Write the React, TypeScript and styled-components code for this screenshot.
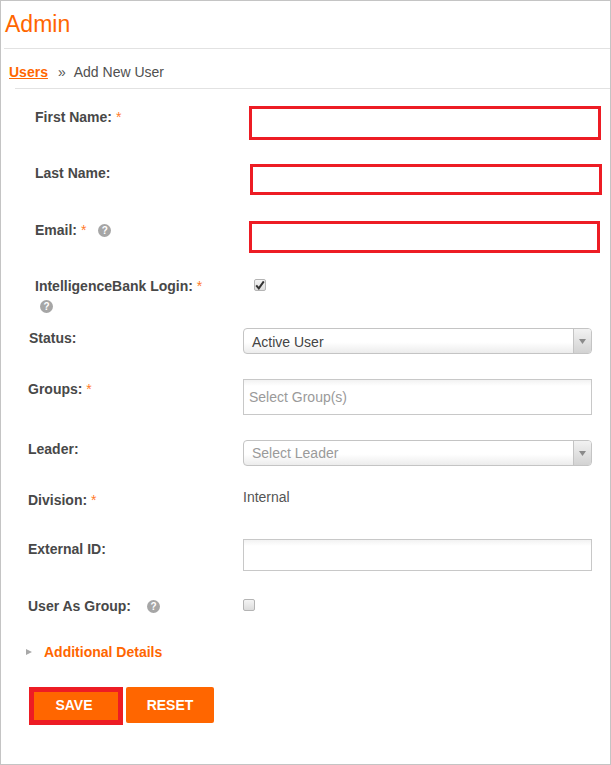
import styled, { createGlobalStyle } from "styled-components";

const GlobalStyle = createGlobalStyle`
  html, body {
    margin: 0;
    padding: 0;
    background: #fff;
    overflow: hidden;
  }
  * {
    box-sizing: border-box;
  }
`;

function Help({ gap = 12 }: { gap?: number }) {
  return <HelpIcon $gap={gap}>?</HelpIcon>;
}

function Check({ checked = false }: { checked?: boolean }) {
  return (
    <CheckBox>
      {checked ? (
        <svg width="10" height="10" viewBox="0 0 10 10">
          <path d="M1.2 5.4 L3.8 8.4 L8.8 1.4" fill="none" stroke="#333" strokeWidth="2" />
        </svg>
      ) : null}
    </CheckBox>
  );
}

function Caret() {
  return (
    <SelectCaret>
      <svg width="7" height="5" viewBox="0 0 7 5">
        <path d="M0 0 H7 L3.5 5 Z" fill="#8a8a8a" />
      </svg>
    </SelectCaret>
  );
}

export default function App() {
  return (
    <Frame>
      <GlobalStyle />
      <Header>
        <Title>Admin</Title>
      </Header>
      <Breadcrumb>
        <CrumbLink>Users</CrumbLink>
        <CrumbSep>»</CrumbSep>
        <span>Add New User</span>
      </Breadcrumb>
      <Form>
        <Row $height={58} $indent={34} $labelWidth={214}>
          <Label $top={1}>
            First Name: <Req>*</Req>
          </Label>
          <HighlightInput $width={352} />
        </Row>
        <Row $height={57} $indent={34} $labelWidth={215}>
          <Label $top={-1}>Last Name:</Label>
          <HighlightInput $width={352} $height={31} />
        </Row>
        <Row $height={58} $indent={34} $labelWidth={214}>
          <Label $top={-1}>
            Email: <Req>*</Req>
            <Help />
          </Label>
          <HighlightInput $width={351} $height={32} />
        </Row>
        <Row $height={49} $indent={34} $labelWidth={219}>
          <Label $top={-3}>
            IntelligenceBank Login: <Req>*</Req>
            <HelpBelow>
              <Help />
            </HelpBelow>
          </Label>
          <Check checked />
        </Row>
        <Row $height={51} $indent={28} $labelWidth={214}>
          <Label $top={0}>Status:</Label>
          <SelectBox>
            <SelectValue>Active User</SelectValue>
            <Caret />
          </SelectBox>
        </Row>
        <Row $height={61} $indent={27} $labelWidth={215}>
          <Label $top={0}>
            Groups: <Req>*</Req>
          </Label>
          <TextBox $height={36}>
            <Placeholder>Select Group(s)</Placeholder>
          </TextBox>
        </Row>
        <Row $height={50} $indent={27} $labelWidth={215}>
          <Label $top={-1}>Leader:</Label>
          <SelectBox>
            <SelectValue $muted>Select Leader</SelectValue>
            <Caret />
          </SelectBox>
        </Row>
        <Row $height={49} $indent={27} $labelWidth={215}>
          <Label $top={0}>
            Division: <Req>*</Req>
          </Label>
          <StaticValue>Internal</StaticValue>
        </Row>
        <Row $height={60} $indent={27} $labelWidth={215}>
          <Label $top={0}>External ID:</Label>
          <TextBox $height={32} />
        </Row>
        <Row $height={43} $indent={27} $labelWidth={215}>
          <Label $top={-3}>
            User As Group:
            <Help gap={16} />
          </Label>
          <Check />
        </Row>
        <Details>
          <DetailsArrow />
          Additional Details
        </Details>
        <Actions>
          <SaveButton>SAVE</SaveButton>
          <ResetButton>RESET</ResetButton>
        </Actions>
      </Form>
    </Frame>
  );
}

const Frame = styled.div`
  width: 611px;
  height: 765px;
  border: 1px solid #c4c4c4;
  font-family: "Liberation Sans", Arial, sans-serif;
  font-size: 14px;
  color: #444;
  overflow: hidden;
`;

const Header = styled.div`
  height: 48px;
  margin-left: 3px;
  border-bottom: 1px solid #e2e2e2;
`;

const Title = styled.h1`
  margin: 0;
  padding: 9px 0 0 1px;
  font-size: 23px;
  line-height: 28px;
  font-weight: 400;
  color: #ff6600;
`;

const Breadcrumb = styled.div`
  display: flex;
  align-items: center;
  height: 40px;
  margin-left: 8px;
  padding-top: 5px;
  font-size: 14px;
  color: #505050;
  position: relative;

  &::after {
    content: "";
    position: absolute;
    left: 6px;
    right: 0;
    bottom: 0;
    height: 1px;
    background: #e2e2e2;
  }
`;

const CrumbLink = styled.a`
  color: #ff6600;
  font-weight: 700;
  text-decoration: underline;
`;

const CrumbSep = styled.span`
  margin: 0 8px 0 10px;
  color: #555;
`;

const Form = styled.div`
  padding-top: 17px;
`;

const Row = styled.div<{ $height: number; $indent: number; $labelWidth: number }>`
  display: grid;
  grid-template-columns: ${(props) => props.$labelWidth}px 1fr;
  height: ${(props) => props.$height}px;
  padding-left: ${(props) => props.$indent}px;
  align-items: start;
`;

const Label = styled.div<{ $top: number }>`
  position: relative;
  top: ${(props) => props.$top}px;
  font-weight: 700;
  font-size: 14px;
  line-height: 20px;
  color: #484848;
`;

const Req = styled.span`
  font-weight: 400;
  color: #ff7a2a;
`;

const HelpIcon = styled.span<{ $gap: number }>`
  display: inline-flex;
  align-items: center;
  justify-content: center;
  width: 13px;
  height: 13px;
  margin-left: ${(props) => props.$gap}px;
  border-radius: 50%;
  background: #a6a6a6;
  color: #fff;
  font-size: 10px;
  font-weight: 700;
  line-height: 13px;
  vertical-align: 1px;
`;

const HelpBelow = styled.div`
  margin-left: -7px;
  line-height: 20px;
`;

const HighlightInput = styled.div<{ $width: number; $height?: number }>`
  width: ${(props) => props.$width}px;
  height: ${(props) => props.$height ?? 34}px;
  border: 3px solid #ed1c24;
  background: #fff;
`;

const CheckBox = styled.span`
  display: flex;
  align-items: center;
  justify-content: center;
  width: 12px;
  height: 12px;
  border: 1px solid #b4b4b4;
  border-radius: 2px;
  background: linear-gradient(#f4f4f4, #dcdcdc);
`;

const SelectBox = styled.div`
  display: flex;
  width: 349px;
  height: 26px;
  border: 1px solid #c4c4c4;
  border-radius: 4px;
  background: linear-gradient(#ffffff 55%, #ececec);
  overflow: hidden;
`;

const SelectValue = styled.span<{ $muted?: boolean }>`
  flex: 1;
  padding-left: 8px;
  font-size: 14px;
  line-height: ${(props) => (props.$muted ? "25px" : "27px")};
  color: ${(props) => (props.$muted ? "#9a9a9a" : "#444")};
`;

const SelectCaret = styled.span`
  display: flex;
  align-items: center;
  justify-content: center;
  width: 18px;
  border-left: 1px solid #c4c4c4;
  background: linear-gradient(#f2f2f2, #d2d2d2);
`;

const TextBox = styled.div<{ $height: number }>`
  width: 349px;
  height: ${(props) => props.$height}px;
  border: 1px solid #c8c8c8;
  background: linear-gradient(#f2f2f2, #ffffff 6px);
  padding-left: 5px;
  line-height: ${(props) => props.$height - 2}px;
`;

const Placeholder = styled.span`
  font-size: 14px;
  color: #9a9a9a;
`;

const StaticValue = styled.div`
  font-size: 14px;
  line-height: 14px;
  color: #555;
`;

const Details = styled.div`
  display: flex;
  align-items: center;
  height: 20px;
  padding-left: 25px;
  font-size: 14px;
  font-weight: 700;
  color: #ff6600;
`;

const DetailsArrow = styled.span`
  width: 0;
  height: 0;
  margin-right: 12px;
  border-left: 6px solid #a8a8a8;
  border-top: 3px solid transparent;
  border-bottom: 3px solid transparent;
`;

const Actions = styled.div`
  display: flex;
  align-items: flex-start;
  gap: 3px;
  margin-top: 25px;
  padding-left: 28px;
`;

const SaveButton = styled.button`
  width: 94px;
  height: 38px;
  border: 5px solid #ed1c24;
  background: #ff6600;
  color: #fff;
  font-family: inherit;
  font-size: 14px;
  font-weight: 700;
  padding: 0 4px 2px 0;
`;

const ResetButton = styled.button`
  width: 88px;
  height: 36px;
  border: none;
  border-radius: 2px;
  background: #ff6600;
  color: #fff;
  font-family: inherit;
  font-size: 14px;
  font-weight: 700;
  padding: 0;
`;
